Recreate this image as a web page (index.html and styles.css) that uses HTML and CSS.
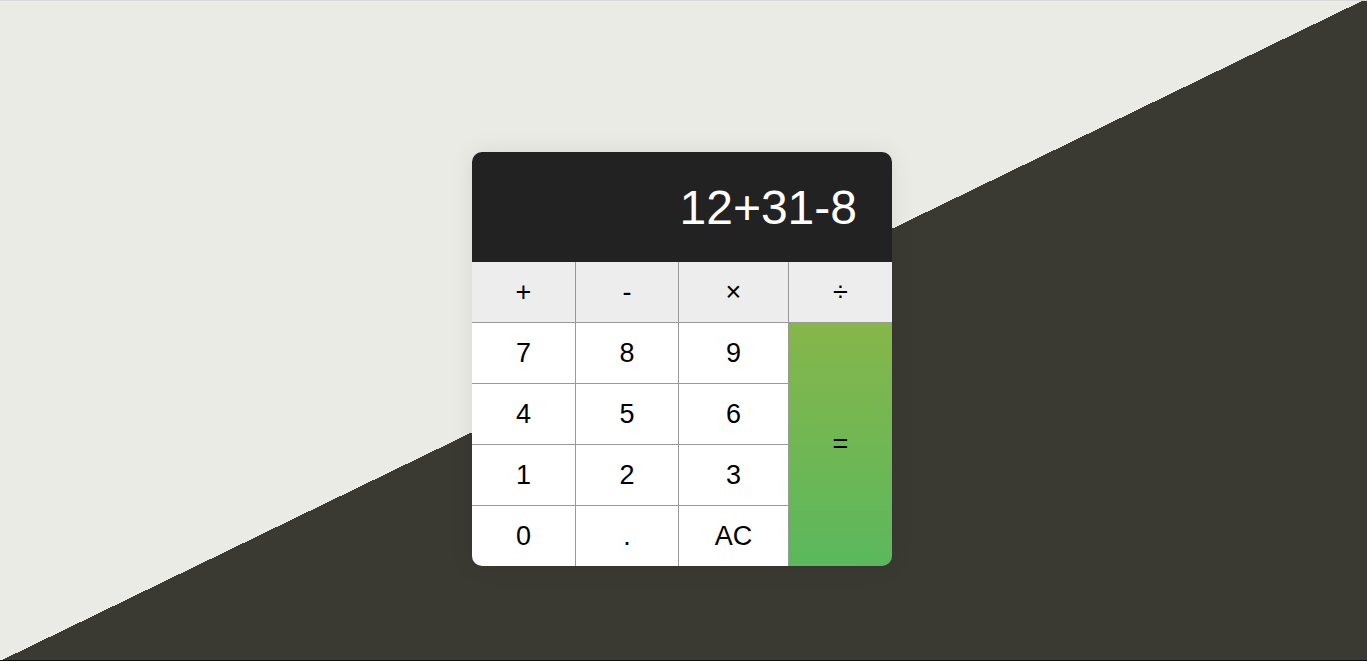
FILE: index.html
```html
<!DOCTYPE html>
<html lang="en">
<head>
<meta charset="utf-8">
<title>Calculator</title>
<link rel="stylesheet" href="styles.css">
</head>
<body>
<main class="page">
  <div class="calc">
    <div class="display">12+31-8</div>
    <div class="keys">
      <button class="key op">+</button>
      <button class="key op">-</button>
      <button class="key op">×</button>
      <button class="key op last-col">÷</button>
      <button class="key">7</button>
      <button class="key">8</button>
      <button class="key">9</button>
      <button class="key equals">=</button>
      <button class="key">4</button>
      <button class="key">5</button>
      <button class="key">6</button>
      <button class="key">1</button>
      <button class="key">2</button>
      <button class="key">3</button>
      <button class="key last-row">0</button>
      <button class="key last-row">.</button>
      <button class="key last-row">AC</button>
    </div>
  </div>
</main>
</body>
</html>
```
FILE: styles.css
```css
* { box-sizing: border-box; }
html, body { margin: 0; padding: 0; }
body {
  height: 100vh;
  border-top: 1px solid #d9d9d9;
  border-bottom: 1px solid #0e0e0e;
  background-color: #3a3932;
  background-image: linear-gradient(to bottom right, #eaebe5 50%, #3a3932 50%);
  background-size: 1364px 100%;
  background-repeat: no-repeat;
  font-family: "Liberation Sans", Arial, sans-serif;
  overflow: hidden;
}
.page {
  display: flex;
  justify-content: center;
  align-items: flex-start;
  padding-top: 151px;
  padding-right: 3px;
}
.calc {
  width: 420px;
  border-radius: 10px;
  overflow: hidden;
  box-shadow: 0 0 24px rgba(0, 0, 0, 0.08);
}
.display {
  height: 110px;
  background: #222222;
  color: #ffffff;
  font-size: 48px;
  display: flex;
  align-items: center;
  justify-content: flex-end;
  padding-right: 35px;
}
.keys {
  display: grid;
  grid-template-columns: 104px 103px 110px 103px;
  grid-template-rows: 61px 61px 61px 61px 60px;
}
.key {
  margin: 0;
  padding: 0;
  border: 0;
  border-right: 1px solid #999999;
  border-bottom: 1px solid #999999;
  background: #ffffff;
  color: #000000;
  font-family: "Liberation Sans", Arial, sans-serif;
  font-size: 27px;
  display: flex;
  align-items: center;
  justify-content: center;
  border-radius: 0;
}
.op { background: #ededed; }
.last-col { border-right: 0; }
.last-row { border-bottom: 0; }
.equals {
  grid-column: 4;
  grid-row: 2 / span 4;
  border: 0;
  background: linear-gradient(#86b64a, #5bb85d);
}
```
